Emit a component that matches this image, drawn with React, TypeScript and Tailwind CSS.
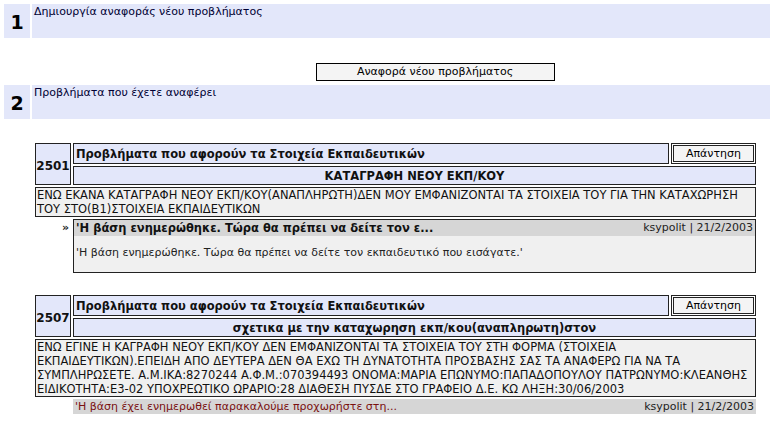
const FONT = "font-['DejaVu_Sans','Noto_Sans',sans-serif]";

interface Reply {
  title: string;
  author: string;
  date: string;
  body?: string;
}

interface Issue {
  id: string;
  category: string;
  subject: string;
  lines: string[];
  reply: Reply;
}

const ISSUES: Issue[] = [
  {
    id: "2501",
    category: "Προβλήματα που αφορούν τα Στοιχεία Εκπαιδευτικών",
    subject: "ΚΑΤΑΓΡΑΦΗ ΝΕΟΥ ΕΚΠ/ΚΟΥ",
    lines: [
      "ΕΝΩ ΕΚΑΝΑ ΚΑΤΑΓΡΑΦΗ ΝΕΟΥ ΕΚΠ/ΚΟΥ(ΑΝΑΠΛΗΡΩΤΗ)ΔΕΝ ΜΟΥ ΕΜΦΑΝΙΖΟΝΤΑΙ ΤΑ ΣΤΟΙΧΕΙΑ ΤΟΥ ΓΙΑ ΤΗΝ ΚΑΤΑΧΩΡΗΣΗ",
      "ΤΟΥ ΣΤΟ(Β1)ΣΤΟΙΧΕΙΑ ΕΚΠΑΙΔΕΥΤΙΚΩΝ",
    ],
    reply: {
      title: "'Η βάση ενημερώθηκε. Τώρα θα πρέπει να δείτε τον ε...",
      author: "ksypolit",
      date: "21/2/2003",
      body: "'Η βάση ενημερώθηκε. Τώρα θα πρέπει να δείτε τον εκπαιδευτικό που εισάγατε.'",
    },
  },
  {
    id: "2507",
    category: "Προβλήματα που αφορούν τα Στοιχεία Εκπαιδευτικών",
    subject: "σχετικα με την καταχωρηση εκπ/κου(αναπληρωτη)στον",
    lines: [
      "ΕΝΩ ΕΓΙΝΕ Η ΚΑΓΡΑΦΗ ΝΕΟΥ ΕΚΠ/ΚΟΥ ΔΕΝ ΕΜΦΑΝΙΖΟΝΤΑΙ ΤΑ ΣΤΟΙΧΕΙΑ ΤΟΥ ΣΤΗ ΦΟΡΜΑ (ΣΤΟΙΧΕΙΑ",
      "ΕΚΠΑΙΔΕΥΤΙΚΩΝ).ΕΠΕΙΔΗ ΑΠΟ ΔΕΥΤΕΡΑ ΔΕΝ ΘΑ ΕΧΩ ΤΗ ΔΥΝΑΤΟΤΗΤΑ ΠΡΟΣΒΑΣΗΣ ΣΑΣ ΤΑ ΑΝΑΦΕΡΩ ΓΙΑ ΝΑ ΤΑ",
      "ΣΥΜΠΛΗΡΩΣΕΤΕ. Α.Μ.ΙΚΑ:8270244 Α.Φ.Μ.:070394493 ΟΝΟΜΑ:ΜΑΡΙΑ ΕΠΩΝΥΜΟ:ΠΑΠΑΔΟΠΟΥΛΟΥ ΠΑΤΡΩΝΥΜΟ:ΚΛΕΑΝΘΗΣ",
      "ΕΙΔΙΚΟΤΗΤΑ:Ε3-02 ΥΠΟΧΡΕΩΤΙΚΟ ΩΡΑΡΙΟ:28 ΔΙΑΘΕΣΗ ΠΥΣΔΕ ΣΤΟ ΓΡΑΦΕΙΟ Δ.Ε. ΚΩ ΛΗΞΗ:30/06/2003",
    ],
    reply: {
      title: "'Η βάση έχει ενημερωθεί παρακαλούμε προχωρήστε στη...",
      author: "ksypolit",
      date: "21/2/2003",
    },
  },
];

function Section({ num, title }: { num: string; title: string }) {
  return (
    <div className="flex h-[34px] gap-[2px] pl-[4px]">
      <div className="flex w-[26px] items-center justify-center bg-[#e3e7fa] pt-[3px] text-[19px] font-bold text-black">
        {num}
      </div>
      <div className="flex-1 bg-[#e3e7fa] px-[2px] pt-[1px] text-[11px] leading-[13px] text-[#000033]">
        {title}
      </div>
    </div>
  );
}

function AnswerButton() {
  return (
    <div className="border border-[#222] p-[1px]">
      <div className="flex h-full items-center justify-center border border-[#222] bg-[#f4f4f4] text-[11px] text-black">
        Απάντηση
      </div>
    </div>
  );
}

function ReplyBox({ reply }: { reply: Reply }) {
  if (!reply.body) {
    return (
      <div className="col-span-2 flex h-[15px] items-center justify-between bg-[#d6d6d6] px-[2px] text-[11px] text-[#7a1010]">
        <span>{reply.title}</span>
        <span className="text-[#222]">
          {reply.author} | {reply.date}
        </span>
      </div>
    );
  }
  return (
    <div className="col-span-2 h-[54px] border border-[#222] bg-[#f0f0f0]">
      <div className="flex h-[16px] items-center justify-between bg-[#d6d6d6] px-[2px] text-[11.5px]">
        <span className="font-bold text-[#111]">{reply.title}</span>
        <span className="text-[11px] text-[#222]">
          {reply.author} | {reply.date}
        </span>
      </div>
      <div className="px-[2px] pt-[10px] text-[11px] text-[#222]">{reply.body}</div>
    </div>
  );
}

function IssueTable({ issue }: { issue: Issue }) {
  return (
    <div className="ml-[35px] mr-[14px] grid grid-cols-[36px_1fr_85px] gap-[2px] text-[11px] leading-[14px]">
      <div className="row-span-2 flex items-center justify-center border border-[#222] bg-[#e3e7fa] pt-[4px] text-[12px] font-bold text-[#111]">
        {issue.id}
      </div>
      <div className="flex h-[21px] items-center border border-[#222] bg-[#e3e7fa] px-[2px] text-[11.5px] font-bold text-[#111]">
        {issue.category}
      </div>
      <AnswerButton />
      <div className="col-span-2 flex h-[19px] items-center justify-center border border-[#222] bg-[#e3e7fa] text-[11.5px] font-bold text-[#111]">
        {issue.subject}
      </div>
      <div className="col-span-3 border border-[#222] bg-[#f0f0f0] px-[1px] text-[11.5px] leading-[14px] text-[#111]">
        {issue.lines.map((line, i) => (
          <div key={i} className="whitespace-nowrap">
            {line}
          </div>
        ))}
      </div>
      <div className="flex justify-end pr-[2px] pt-[2px] text-[11px] font-bold text-[#222]">
        {issue.reply.body ? "»" : ""}
      </div>
      <ReplyBox reply={issue.reply} />
    </div>
  );
}

export default function App() {
  return (
    <div className={`${FONT} h-[425px] w-[770px] overflow-hidden bg-white pt-[4px]`}>
      <Section num="1" title="Δημιουργία αναφοράς νέου προβλήματος" />
      <div className="flex justify-center pl-[100px] pt-[25px]">
        <div className="flex h-[18px] w-[239px] items-center justify-center border border-black bg-[#f4f4f4] text-[11px] text-black">
          Αναφορά νέου προβλήματος
        </div>
      </div>
      <div className="pt-[4px]">
        <Section num="2" title="Προβλήματα που έχετε αναφέρει" />
      </div>
      <div className="pt-[24px]">
        <IssueTable issue={ISSUES[0]} />
      </div>
      <div className="pt-[22px]">
        <IssueTable issue={ISSUES[1]} />
      </div>
    </div>
  );
}
